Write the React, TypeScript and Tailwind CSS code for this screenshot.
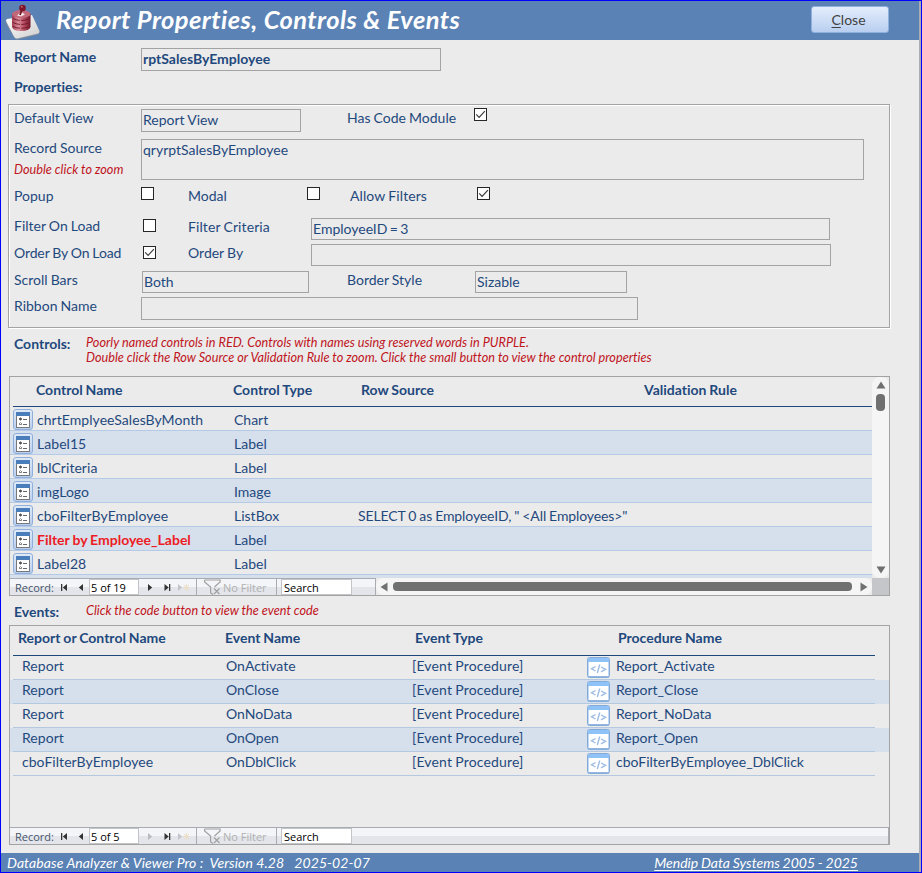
import type { ReactNode } from "react";
import clsx from "clsx";

type Control = { name: string; type: string; rowSource?: string; badName?: boolean };

const CONTROLS: Control[] = [
  { name: "chrtEmplyeeSalesByMonth", type: "Chart" },
  { name: "Label15", type: "Label" },
  { name: "lblCriteria", type: "Label" },
  { name: "imgLogo", type: "Image" },
  { name: "cboFilterByEmployee", type: "ListBox", rowSource: 'SELECT 0 as EmployeeID, " <All Employees>"' },
  { name: "Filter by Employee_Label", type: "Label", badName: true },
  { name: "Label28", type: "Label" },
];

const EVENTS = [
  { owner: "Report", event: "OnActivate", proc: "Report_Activate" },
  { owner: "Report", event: "OnClose", proc: "Report_Close" },
  { owner: "Report", event: "OnNoData", proc: "Report_NoData" },
  { owner: "Report", event: "OnOpen", proc: "Report_Open" },
  { owner: "cboFilterByEmployee", event: "OnDblClick", proc: "cboFilterByEmployee_DblClick" },
];

// Text box with a thin grey frame
function Field({ className, children }: { className: string; children?: ReactNode }) {
  return (
    <div className={clsx("shrink-0 border border-[#a3a3a3] pl-[1px] leading-[19px] whitespace-nowrap", className)}>
      {children}
    </div>
  );
}

function Label({ className, children }: { className: string; children: ReactNode }) {
  return <div className={clsx("shrink-0 leading-5 whitespace-nowrap", className)}>{children}</div>;
}

function Check({ checked, className }: { checked?: boolean; className?: string }) {
  return (
    <div className={clsx("size-[13px] shrink-0 border border-[#262626] bg-white", className)}>
      {checked && (
        <svg viewBox="0 0 11 11" className="block size-[11px]">
          <path d="M1.2 5.4 L4.1 8.3 L9.9 2.2" fill="none" stroke="#3c3c3c" strokeWidth="1.2" />
        </svg>
      )}
    </div>
  );
}

function Logo() {
  return (
    <svg viewBox="0 0 36 38" className="h-[38px] w-[36px]">
      <defs>
        <linearGradient id="drum" x1="0" x2="1">
          <stop offset="0" stopColor="#a23a4e" />
          <stop offset="0.35" stopColor="#dc8f9d" />
          <stop offset="0.65" stopColor="#b64a5f" />
          <stop offset="1" stopColor="#6f1528" />
        </linearGradient>
        <linearGradient id="plate" x1="0" x2="1" y2="1">
          <stop offset="0" stopColor="#ffffff" />
          <stop offset="1" stopColor="#cfcfcf" />
        </linearGradient>
      </defs>
      <path d="M2 19 L27 14 L34.500 30 Q34.500 32 33 32.500 L12 37.500 Q10 37.500 9 35.500 L1 21Z" fill="#8d939b" />
      <path d="M2 17 L27 13 L34.500 29 Q34.500 31 33 31.500 L12 36.500 Q10 36.500 9 34.500 L1 19 Q1 17.500 2 17Z" fill="url(#plate)" />
      <path d="M7 12 V25 Q8 29 16 29 Q24.500 29 25.500 25 V12Z" fill="url(#drum)" />
      <path d="M8 16.500 Q16 20.500 25 16.500 M8 20.500 Q16 24.500 25 20.500 M8 24.500 Q16 28 25 24.500" fill="none" stroke="#6a1728" strokeWidth="0.900" strokeDasharray="7 1.500" />
      <ellipse cx="16.300" cy="12" rx="9.300" ry="4" fill="#c0677a" />
      <path d="M12 13.500 L16 9.500 L20 12.500 L16 14.500Z" fill="#f4e4e6" />
      <path d="M16.800 8 L15 13" stroke="#6d1225" strokeWidth="1.800" />
      <ellipse cx="17.500" cy="6" rx="3.300" ry="3.300" fill="#7d1429" />
      <circle cx="16.800" cy="4.800" r="1" fill="#c55c70" />
    </svg>
  );
}

function PropsButton() {
  return (
    <div className="flex h-[21px] w-5 shrink-0 items-center justify-center rounded-[3px] border border-[#8fafda] bg-gradient-to-b from-[#dfe9f8] to-[#b9cff0]">
      <svg viewBox="0 0 14 16" className="h-4 w-[14px]" shapeRendering="crispEdges">
        <rect x="0" y="0" width="14" height="16" fill="#787878" />
        <rect x="1" y="4" width="12" height="11" fill="#fff" />
        <rect x="0" y="0" width="14" height="4" fill="#4a7ebb" />
        <rect x="3" y="6" width="3" height="2" fill="#6c6c6c" />
        <rect x="4" y="5" width="1" height="4" fill="#a8a8a8" />
        <rect x="4" y="6" width="1" height="2" fill="#555" />
        <rect x="7" y="7" width="4" height="1" fill="#666" />
        <rect x="3" y="11" width="3" height="2" fill="#8a8a8a" />
        <rect x="4" y="10" width="1" height="1" fill="#a8a8a8" />
        <rect x="4" y="11" width="1" height="1" fill="#fff" />
        <rect x="7" y="12" width="4" height="1" fill="#666" />
      </svg>
    </div>
  );
}

function CodeButton() {
  return (
    <svg viewBox="0 0 23 22" className="h-[22px] w-[23px] shrink-0">
      <rect x="0.500" y="1.500" width="22" height="20" rx="2" fill="#fff" stroke="#82a9d8" />
      <rect x="1" y="2" width="21" height="4" fill="#8fc3f8" />
      <path d="M1.500 6V20M21.500 6V20" stroke="#c3d9f3" />
      <path d="M1 20.800H22" stroke="#8db2df" strokeWidth="1.500" />
      <path d="M8.500 10.500 L4.500 12.800 L8.500 15 M12.800 8.500 L10.300 17 M14 11 L18.500 13.300 L14 15.800" fill="none" stroke="#9dbde4" strokeWidth="1.400" />
    </svg>
  );
}

// Record selector strip at the foot of a subform
function RecordNav({ position, atEnd, className }: { position: string; atEnd?: boolean; className: string }) {
  return (
    <div
      className={clsx(
        "flex h-[17px] border-t border-[#a8abb2] bg-[linear-gradient(#f4f5f8_0_8px,#e3e5ea_8px)] pl-[5px] font-['Open_Sans',sans-serif] text-[11px] leading-[18px] whitespace-nowrap text-[#44546a] [word-spacing:0px]",
        className,
      )}
    >
      <span className="w-[44px]">Record:</span>
      <svg viewBox="0 0 30 16" className="h-4 w-[30px] shrink-0" fill="#333">
        <path d="M2 5h1.300v7H2zM8 5v7L3.800 8.500zM24 5v7L19.800 8.500z" />
      </svg>
      <span className="w-[50px] border border-[#c2c4c8] bg-white pl-[1px] leading-4 text-black">{position}</span>
      <svg viewBox="0 0 57 16" className="h-4 w-[57px] shrink-0" fill="#333">
        <path d="M9 5v7L13.200 8.500z" fill={atEnd ? "#b9bbc0" : "#333"} />
        <path d="M25.500 5v7L29.700 8.500zM30 5h1.300v7H30z" />
        <path d="M39 5v7L43 8.500z" fill="#c2c4c9" />
        <path d="M47.500 5v7M44 8.500h7M45 6l5 5M50 6l-5 5" stroke="#ecdfc8" fill="none" />
      </svg>
      <span className="flex w-[81px] border-x border-[#a8abb2] pl-[7px] text-[#b0b0b0]">
        <svg viewBox="0 0 17 16" className="mr-[2px] h-4 w-[17px] shrink-0" fill="none" stroke="#a0a0a0" strokeWidth="1.200">
          <path d="M0.600 1h15.500v2L10.500 8M0.600 1v2l6 5v6l2.500 1.500" />
          <path d="M10 9.500l5.500 5.500M15.500 9.500L10 15" />
        </svg>
        No Filter
      </span>
      <span className="ml-[4px] w-[71px] border border-[#c2c4c8] bg-white pl-[2px] leading-4 text-black">Search</span>
    </div>
  );
}

function VerticalScroll() {
  return (
    <div className="flex h-[201px] w-[17px] flex-col items-center rounded-[8px] bg-[#f5f5f5]">
      <svg viewBox="0 0 10 8" className="mt-[4px] h-2 w-2.5 shrink-0" fill="#707070"><path d="M5 0.500L9.500 7.500H0.500z" /></svg>
      <div className="mt-[5px] h-[17px] w-[9px] rounded-[4px] bg-[#707070]" />
      <svg viewBox="0 0 10 8" className="mt-auto mb-[4px] h-2 w-2.5 shrink-0" fill="#707070"><path d="M5 7.500L0.500 0.500H9.500z" /></svg>
    </div>
  );
}

function HorizontalScroll() {
  return (
    <div className="flex h-[17px] w-[496px] items-center rounded-[8px] bg-[#f5f5f5]">
      <svg viewBox="0 0 8 10" className="ml-[4px] h-2.5 w-2 shrink-0" fill="#707070"><path d="M0.500 5L7.500 0.500V9.500z" /></svg>
      <div className="ml-[5px] h-[9px] w-[459px] rounded-[4px] bg-[#707070]" />
      <svg viewBox="0 0 8 10" className="ml-[8px] h-2.5 w-2 shrink-0" fill="#707070"><path d="M7.500 5L0.500 0.500V9.500z" /></svg>
    </div>
  );
}

export default function App() {
  return (
    <div className="flex h-[873px] w-[922px] overflow-hidden border border-[#0000ff] bg-[#ebebeb] font-[Lato,sans-serif] text-[14px] text-[#1f497d] [font-variant-ligatures:none] [word-spacing:-0.5px]">
      <div className="flex w-[918px] shrink-0 flex-col">
        {/* Title bar */}
        <header className="flex h-[39px] shrink-0 items-start bg-[#5b82b5]">
          <div className="ml-[4px] mt-[1px] w-[36px]"><Logo /></div>
          <h1 className="ml-[15px] w-[755px] text-[25.5px] leading-[36px] font-bold tracking-[0.42px] whitespace-nowrap text-white italic [word-spacing:0px]">
            Report Properties, Controls &amp; Events
          </h1>
          <button className="mt-[5px] h-[27px] w-[78px] rounded-[3px] border border-[#8fafdc] bg-gradient-to-b from-[#e4edfb] to-[#b9cff0] pr-[3px] leading-[24px] text-[#404040]">
            <span className="underline underline-offset-2">C</span>lose
          </button>
        </header>

        <div className="flex h-[32px] shrink-0 font-bold">
          <Label className="mt-[7px] ml-[13px] w-[127px]">Report Name</Label>
          <Field className="mt-[8px] h-[23px] w-[300px]">rptSalesByEmployee</Field>
        </div>
        <div className="h-[32px] shrink-0 pt-[5px] pl-[13px] leading-5 font-bold">Properties:</div>

        {/* Properties frame, etched edge */}
        <section className="ml-[7px] h-[224px] w-[882px] shrink-0 border border-[#a3a3a3] shadow-[1px_1px_0_#fff,inset_1px_1px_0_#fff]">
          <div className="flex h-[34px] pl-[5px]">
            <Label className="mt-[3px] w-[127px]">Default View</Label>
            <Field className="mt-[4px] h-[23px] w-[160px]">Report View</Field>
            <Label className="mt-[3px] ml-[46px] w-[127px]">Has Code Module</Label>
            <Check checked className="mt-[3px]" />
          </div>
          <div className="flex h-[46px] pl-[5px]">
            <div className="w-[127px] shrink-0">
              <Label className="-mt-[1px]">Record Source</Label>
              <Label className="mt-[1px] text-[12.7px] text-[#c0141c] italic [word-spacing:0px]">Double click to zoom</Label>
            </div>
            <Field className="h-[41px] w-[723px]">qryrptSalesByEmployee</Field>
          </div>
          <div className="flex h-[32px] pl-[5px]">
            <Label className="mt-[1px] w-[127px]">Popup</Label>
            <Check className="mt-[2px]" />
            <Label className="mt-[1px] ml-[34px] w-[119px]">Modal</Label>
            <Check className="mt-[2px]" />
            <Label className="mt-[1px] ml-[30px] w-[127px] tracking-[0.1px]">Allow Filters</Label>
            <Check checked className="mt-[2px]" />
          </div>
          <div className="flex h-[27px] pl-[5px]">
            <Label className="-mt-[1px] w-[129px]">Filter On Load</Label>
            <Check className="mt-[2px]" />
            <Label className="ml-[32px] w-[123px] tracking-[0.1px]">Filter Criteria</Label>
            <Field className="mt-[1px] h-[22px] w-[519px] [word-spacing:-1.2px]">EmployeeID = 3</Field>
          </div>
          <div className="flex h-[27px] pl-[5px]">
            <Label className="-mt-[1px] w-[129px] tracking-[-0.12px]">Order By On Load</Label>
            <Check checked className="mt-[2px]" />
            <Label className="-mt-[1px] ml-[32px] w-[123px]">Order By</Label>
            <Field className="h-[22px] w-[520px]" />
          </div>
          <div className="flex h-[26px] pl-[5px]">
            <Label className="-mt-[1px] w-[128px]">Scroll Bars</Label>
            <Field className="h-[22px] w-[167px]">Both</Field>
            <Label className="-mt-[1px] ml-[38px] w-[128px]">Border Style</Label>
            <Field className="h-[22px] w-[152px]">Sizable</Field>
          </div>
          <div className="flex pl-[5px]">
            <Label className="-mt-[1px] w-[127px]">Ribbon Name</Label>
            <Field className="h-[23px] w-[497px]" />
          </div>
        </section>

        <div className="flex h-[48px] shrink-0 pl-[13px]">
          <div className="mt-[6px] w-[72px] leading-5 font-bold">Controls:</div>
          <div className="mt-[7px] text-[12.7px] leading-[15px] whitespace-nowrap text-[#c0141c] italic [word-spacing:0px]">
            <p>Poorly named controls in RED. Controls with names using reserved words in PURPLE.</p>
            <p>Double click the Row Source or Validation Rule to zoom. Click the small button to view the control properties</p>
          </div>
        </div>

        {/* Controls subform */}
        <section className="ml-[8px] h-[220px] w-[881px] shrink-0 border border-[#a3a3a3]">
          <div className="flex h-[201px]">
            <div className="h-[201px] w-[862px] overflow-hidden">
              <div className="ml-[3px] flex h-[30px] border-b border-[#1f497d] pl-[23px] leading-[26px] font-bold">
                <span className="w-[197px]">Control Name</span>
                <span className="w-[128px]">Control Type</span>
                <span className="w-[283px]">Row Source</span>
                <span>Validation Rule</span>
              </div>
              {CONTROLS.map((c, i) => (
                <div key={c.name} className={clsx("flex h-6 border-b border-[#b4cae6] pl-[3px] leading-[26px]", i % 2 === 1 && "bg-[#d6dfec]")}>
                  <div className="w-[24px] pt-[2px]"><PropsButton /></div>
                  <span className={clsx("w-[197px]", c.badName ? "font-bold text-[#ed1c24]" : "tracking-[0.05px]")}>{c.name}</span>
                  <span className="w-[124px]">{c.type}</span>
                  <span className="tracking-[-0.1px] whitespace-pre">{c.rowSource}</span>
                </div>
              ))}
              <div className="h-6 bg-[#d6dfec]" />
            </div>
            <VerticalScroll />
          </div>
          <div className="flex">
            <RecordNav position="5 of 19" className="w-[366px] border-r" />
            <HorizontalScroll />
            <div className="h-[17px] w-[17px] bg-[#c5c6ca]" />
          </div>
        </section>

        <div className="flex h-[29px] shrink-0 pl-[13px]">
          <div className="mt-[6px] w-[72px] leading-5 font-bold">Events:</div>
          <p className="mt-[7px] text-[12.7px] leading-[15px] text-[#c0141c] italic [word-spacing:0px]">Click the code button to view the event code</p>
        </div>

        {/* Events subform */}
        <section className="ml-[8px] flex h-[220px] w-[881px] shrink-0 flex-col border border-[#a3a3a3]">
          <div className="ml-[3px] flex h-[30px] w-[862px] border-b border-[#1f497d] pl-[5px] leading-[24px] font-bold">
            <span className="w-[207px]">Report or Control Name</span>
            <span className="w-[190px]">Event Name</span>
            <span className="w-[203px]">Event Type</span>
            <span>Procedure Name</span>
          </div>
          {EVENTS.map((e, i) => (
            <div key={e.proc} className={clsx("h-6 pl-[3px]", i % 2 === 1 && "bg-[#d6dfec]")}>
              <div className="flex h-6 w-[862px] border-b border-[#b4c8e0] pl-[9px] leading-[20px]">
                <span className="w-[204px] tracking-[0.05px]">{e.owner}</span>
                <span className="w-[186px]">{e.event}</span>
                <span className="w-[175px] tracking-[0.15px]">[Event Procedure]</span>
                <CodeButton />
                <span className="ml-[6px]">{e.proc}</span>
              </div>
            </div>
          ))}
          <RecordNav position="5 of 5" atEnd className="mt-auto w-[879px] shrink-0 border-r" />
        </section>

        <footer className="mt-auto flex h-[19px] shrink-0 justify-between bg-[#5b82b5] pr-[61px] pl-[6px] leading-[19px] whitespace-pre text-white italic">
          <span className="tracking-[0.08px] [word-spacing:0px]">Database Analyzer &amp; Viewer Pro :  Version 4.28   2025-02-07</span>
          <span className="underline underline-offset-2">Mendip Data Systems 2005 - 2025</span>
        </footer>
      </div>
      <div className="w-[2px] bg-[#a9acb2]" />
    </div>
  );
}
